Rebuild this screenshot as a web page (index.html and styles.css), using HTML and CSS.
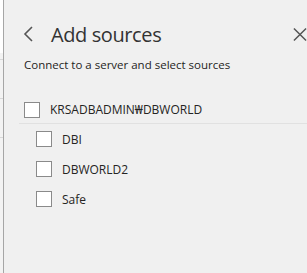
FILE: index.html
```html
<!DOCTYPE html>
<html lang="en">
<head>
    <meta charset="UTF-8">
    <meta name="viewport" content="width=device-width, initial-scale=1.0">
    <title>Add sources</title>
    <link rel="stylesheet" href="styles.css">
</head>
<body>
    <div class="page">
        <div class="behind">
            <div class="behind-top"></div>
            <div class="behind-row"></div>
            <div class="behind-row"></div>
            <div class="behind-row"></div>
        </div>
        <div class="panel">
            <div class="header">
                <button class="icon-btn back" aria-label="Back">
                    <svg width="12" height="16" viewBox="0 0 12 16"><path d="M10 1 L3 8 L10 15" fill="none" stroke="#555" stroke-width="1.6"/></svg>
                </button>
                <h1 class="title">Add sources</h1>
                <button class="icon-btn close" aria-label="Close">
                    <svg width="15" height="15" viewBox="0 0 15 15"><path d="M1 1 L14 14 M14 1 L1 14" fill="none" stroke="#555" stroke-width="1.6"/></svg>
                </button>
            </div>
            <p class="subtitle">Connect to a server and select sources</p>

            <ul class="tree">
                <li class="server">
                    <label class="item">
                        <span class="box"></span>
                        <span class="label">KRSADBADMIN₩DBWORLD</span>
                    </label>
                </li>
                <li class="db">
                    <label class="item"><span class="box"></span><span class="label">DBI</span></label>
                </li>
                <li class="db">
                    <label class="item"><span class="box"></span><span class="label">DBWORLD2</span></label>
                </li>
                <li class="db">
                    <label class="item"><span class="box"></span><span class="label">Safe</span></label>
                </li>
            </ul>
        </div>
    </div>
</body>
</html>
```

FILE: styles.css
```css
body {
    margin: 0;
    font-family: "Open Sans", "Noto Sans", Arial, sans-serif;
    color: #252423;
    background: #f0f0f0;
    overflow: hidden;
}
.page {
    display: flex;
    height: 273px;
}
.behind {
    width: 3px;
    background: #f3f3f3;
    display: flex;
    flex-direction: column;
}
.behind-top {
    height: 53px;
    background: #ffffff;
}
.behind-row {
    height: 32px;
    border-top: 1px solid #d8d8d8;
    margin-top: 6px;
}
.panel {
    flex: 1;
    background: #f0f0f0;
    border-left: 1px solid #a6a6a6;
    padding: 0 0 0 20px;
}
.header {
    display: flex;
    align-items: center;
    height: 34px;
    margin-top: 17px;
}
.icon-btn {
    background: none;
    border: none;
    padding: 0;
    display: flex;
    align-items: center;
    cursor: pointer;
}
.back {
    margin-left: -2px;
    margin-right: 17px;
}
.title {
    flex: 1;
    margin: 0;
    font-size: 20px;
    font-weight: 400;
    letter-spacing: -0.4px;
    color: #333333;
}
.close {
    margin-right: 0;
    width: 14px;
    overflow: hidden;
}
.subtitle {
    margin: 6px 0 0;
    font-size: 11.5px;
    color: #252423;
}
.tree {
    list-style: none;
    margin: 24px 0 0;
    padding: 0;
}
.item {
    display: flex;
    align-items: center;
    gap: 10px;
    height: 30px;
}
.server {
    border-bottom: 1px solid #e1e1e1;
    margin-left: -5px;
    padding-left: 5px;
}
.server .item {
    height: 27px;
}
.db {
    padding-left: 12px;
}
.box {
    width: 14px;
    height: 14px;
    background: #ffffff;
    border: 1px solid #8a8a8a;
}
.label {
    font-size: 12px;
}
```
